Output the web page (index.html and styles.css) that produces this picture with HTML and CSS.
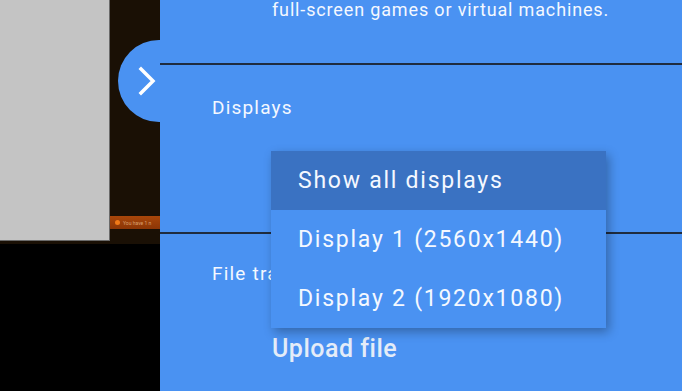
FILE: index.html
```html
<!DOCTYPE html>
<html lang="en">
<head>
  <meta charset="UTF-8" />
  <meta name="viewport" content="width=device-width, initial-scale=1" />
  <title>Display settings</title>
  <link rel="stylesheet" href="styles.css">
</head>
<body>

  <div class="remote">
    <div class="screen">
      <div class="window"></div>
      <div class="desktop">
        <div class="taskbar"><span class="dot"></span><span class="task-text">You have 1 n</span></div>
      </div>
    </div>
  </div>

  <div class="sidebar">
    <button class="tab" aria-label="Close sidebar">
      <svg width="20" height="32" viewBox="0 0 20 32" fill="none" stroke="#fff" stroke-width="3.5" stroke-linecap="square">
        <path d="M3 4 L15 16 L3 28" />
      </svg>
    </button>

    <section class="section intro">
      <p>full-screen games or virtual machines.</p>
    </section>

    <section class="section displays">
      <h3>Displays</h3>
    </section>

    <section class="section transfer">
      <h3>File transfer</h3>
      <div class="upload">Upload file</div>
    </section>

    <ul class="dropdown" role="listbox">
      <li class="selected">Show all displays</li>
      <li>Display 1 (2560x1440)</li>
      <li>Display 2 (1920x1080)</li>
    </ul>
  </div>

</body>
</html>
```

FILE: styles.css
```css
body {
  margin: 0;
  background: #000;
  display: flex;
  height: 391px;
  overflow: hidden;
  font-family: Roboto, "Liberation Sans", sans-serif;
  color: #f4f8ff;
}
.remote {
  width: 160px;
  flex-shrink: 0;
}
.screen {
  display: flex;
  height: 244px;
  background: #1a1005;
}
.window {
  width: 109px;
  height: 240px;
  background: #c4c4c4;
  border-right: 1px solid #6a6a6a;
  border-bottom: 1px solid #6a6a6a;
}
.desktop {
  flex: 1;
  padding-top: 216px;
  overflow: hidden;
}
.taskbar {
  height: 13px;
  background: linear-gradient(#a8460a, #8c3606);
  display: flex;
  align-items: center;
  gap: 3px;
  padding-left: 5px;
  white-space: nowrap;
}
.dot {
  width: 5px;
  height: 5px;
  border-radius: 50%;
  background: #f07a18;
  flex-shrink: 0;
}
.task-text {
  font-size: 5px;
  color: #d8a070;
}
.sidebar {
  flex: 1;
  position: relative;
  background: #4a92f2;
}
.tab {
  position: absolute;
  left: -42px;
  top: 40px;
  width: 42px;
  height: 82px;
  border: none;
  border-radius: 41px 0 0 41px;
  background: #4a92f2;
  padding: 0 0 0 20px;
  display: flex;
  align-items: center;
}
.section {
  border-bottom: 2px solid #1f2c3f;
}
.section h3 {
  margin: 0;
  font-weight: 400;
  font-size: 19px;
  letter-spacing: 1.2px;
  padding-left: 52px;
}
.intro {
  height: 63px;
}
.intro p {
  margin: 0;
  padding-left: 112px;
  font-size: 18px;
  line-height: 20px;
  letter-spacing: 0.85px;
}
.displays {
  height: 169px;
  padding-top: 31px;
  box-sizing: border-box;
}
.transfer {
  border-bottom: none;
  padding-top: 28px;
}
.upload {
  margin: 49px 0 0 112px;
  font-size: 25px;
  font-weight: 500;
  letter-spacing: 0.5px;
  color: #e4ecf8;
}
.dropdown {
  position: absolute;
  left: 111px;
  top: 151px;
  width: 335px;
  margin: 0;
  padding: 0;
  list-style: none;
  background: #4a92f2;
  box-shadow: 3px 4px 10px rgba(0, 0, 0, 0.3);
}
.dropdown li {
  height: 59px;
  line-height: 59px;
  padding-left: 27px;
  font-size: 23px;
  letter-spacing: 1.75px;
}
.dropdown .selected {
  background: #3a72c2;
}
```
